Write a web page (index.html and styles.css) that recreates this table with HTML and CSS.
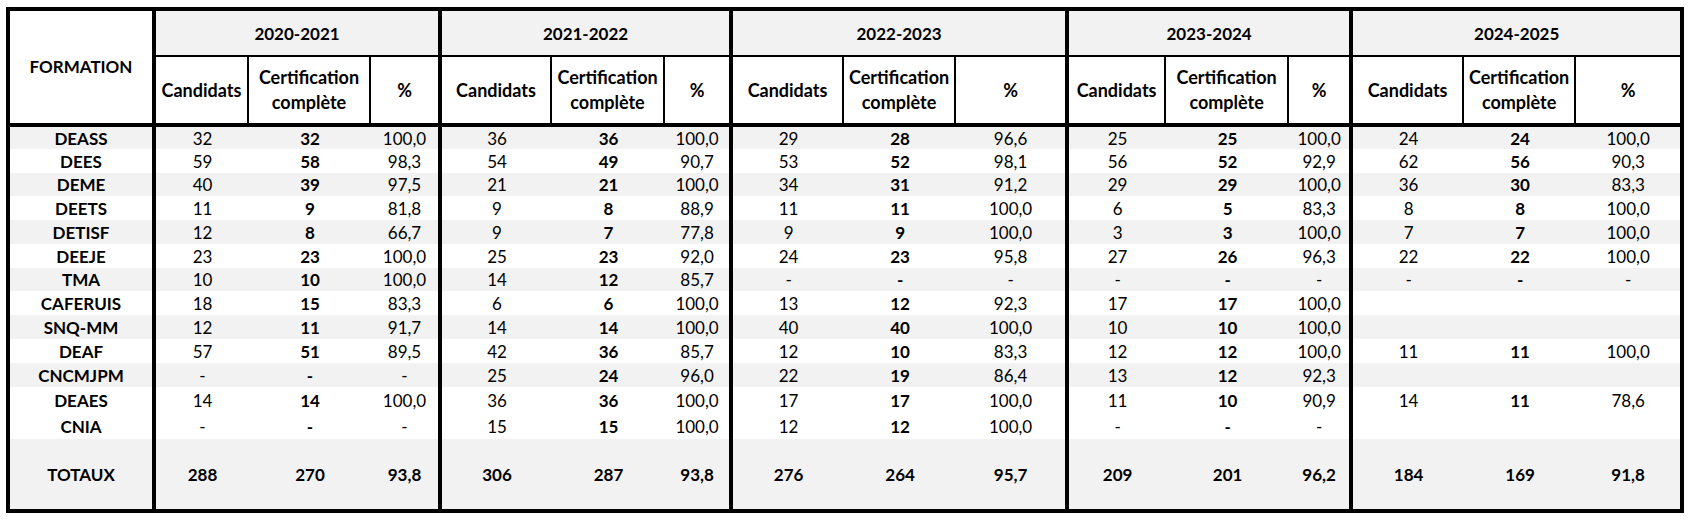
FILE: index.html
```html
<!DOCTYPE html>
<html lang="fr">
<head>
<meta charset="utf-8">
<title>Résultats par formation</title>
<link rel="stylesheet" href="styles.css">
</head>
<body>
<table class="results">
  <colgroup>
    <col class="w-form">
    <col class="w93"><col class="w122"><col class="w71">
    <col class="w110"><col class="w113"><col class="w68">
    <col class="w111"><col class="w112"><col class="w113">
    <col class="w97"><col class="w123"><col class="w64">
    <col class="w111"><col class="w112"><col class="w104">
  </colgroup>
  <thead>
    <tr class="years">
      <th rowspan="2" class="formation">FORMATION</th>
      <th colspan="3">2020-2021</th>
      <th colspan="3">2021-2022</th>
      <th colspan="3">2022-2023</th>
      <th colspan="3">2023-2024</th>
      <th colspan="3">2024-2025</th>
    </tr>
    <tr class="subhead">
      <th>Candidats</th><th>Certification complète</th><th>%</th>
      <th>Candidats</th><th>Certification complète</th><th>%</th>
      <th>Candidats</th><th>Certification complète</th><th>%</th>
      <th>Candidats</th><th>Certification complète</th><th>%</th>
      <th>Candidats</th><th>Certification complète</th><th>%</th>
    </tr>
  </thead>
  <tbody>
    <tr class="alt h22"><th>DEASS</th>
      <td>32</td><td>32</td><td>100,0</td>
      <td>36</td><td>36</td><td>100,0</td>
      <td>29</td><td>28</td><td>96,6</td>
      <td>25</td><td>25</td><td>100,0</td>
      <td>24</td><td>24</td><td>100,0</td></tr>
    <tr><th>DEES</th>
      <td>59</td><td>58</td><td>98,3</td>
      <td>54</td><td>49</td><td>90,7</td>
      <td>53</td><td>52</td><td>98,1</td>
      <td>56</td><td>52</td><td>92,9</td>
      <td>62</td><td>56</td><td>90,3</td></tr>
    <tr class="alt h23"><th>DEME</th>
      <td>40</td><td>39</td><td>97,5</td>
      <td>21</td><td>21</td><td>100,0</td>
      <td>34</td><td>31</td><td>91,2</td>
      <td>29</td><td>29</td><td>100,0</td>
      <td>36</td><td>30</td><td>83,3</td></tr>
    <tr><th>DEETS</th>
      <td>11</td><td>9</td><td>81,8</td>
      <td>9</td><td>8</td><td>88,9</td>
      <td>11</td><td>11</td><td>100,0</td>
      <td>6</td><td>5</td><td>83,3</td>
      <td>8</td><td>8</td><td>100,0</td></tr>
    <tr class="alt"><th>DETISF</th>
      <td>12</td><td>8</td><td>66,7</td>
      <td>9</td><td>7</td><td>77,8</td>
      <td>9</td><td>9</td><td>100,0</td>
      <td>3</td><td>3</td><td>100,0</td>
      <td>7</td><td>7</td><td>100,0</td></tr>
    <tr><th>DEEJE</th>
      <td>23</td><td>23</td><td>100,0</td>
      <td>25</td><td>23</td><td>92,0</td>
      <td>24</td><td>23</td><td>95,8</td>
      <td>27</td><td>26</td><td>96,3</td>
      <td>22</td><td>22</td><td>100,0</td></tr>
    <tr class="alt h23"><th>TMA</th>
      <td>10</td><td>10</td><td>100,0</td>
      <td>14</td><td>12</td><td>85,7</td>
      <td>-</td><td>-</td><td>-</td>
      <td>-</td><td>-</td><td>-</td>
      <td>-</td><td>-</td><td>-</td></tr>
    <tr><th>CAFERUIS</th>
      <td>18</td><td>15</td><td>83,3</td>
      <td>6</td><td>6</td><td>100,0</td>
      <td>13</td><td>12</td><td>92,3</td>
      <td>17</td><td>17</td><td>100,0</td>
      <td></td><td></td><td></td></tr>
    <tr class="alt"><th>SNQ-MM</th>
      <td>12</td><td>11</td><td>91,7</td>
      <td>14</td><td>14</td><td>100,0</td>
      <td>40</td><td>40</td><td>100,0</td>
      <td>10</td><td>10</td><td>100,0</td>
      <td></td><td></td><td></td></tr>
    <tr><th>DEAF</th>
      <td>57</td><td>51</td><td>89,5</td>
      <td>42</td><td>36</td><td>85,7</td>
      <td>12</td><td>10</td><td>83,3</td>
      <td>12</td><td>12</td><td>100,0</td>
      <td>11</td><td>11</td><td>100,0</td></tr>
    <tr class="alt"><th>CNCMJPM</th>
      <td>-</td><td>-</td><td>-</td>
      <td>25</td><td>24</td><td>96,0</td>
      <td>22</td><td>19</td><td>86,4</td>
      <td>13</td><td>12</td><td>92,3</td>
      <td></td><td></td><td></td></tr>
    <tr class="h26"><th>DEAES</th>
      <td>14</td><td>14</td><td>100,0</td>
      <td>36</td><td>36</td><td>100,0</td>
      <td>17</td><td>17</td><td>100,0</td>
      <td>11</td><td>10</td><td>90,9</td>
      <td>14</td><td>11</td><td>78,6</td></tr>
    <tr class="h26"><th>CNIA</th>
      <td>-</td><td>-</td><td>-</td>
      <td>15</td><td>15</td><td>100,0</td>
      <td>12</td><td>12</td><td>100,0</td>
      <td>-</td><td>-</td><td>-</td>
      <td></td><td></td><td></td></tr>
  </tbody>
  <tfoot>
    <tr class="total"><th>TOTAUX</th>
      <td>288</td><td>270</td><td>93,8</td>
      <td>306</td><td>287</td><td>93,8</td>
      <td>276</td><td>264</td><td>95,7</td>
      <td>209</td><td>201</td><td>96,2</td>
      <td>184</td><td>169</td><td>91,8</td></tr>
  </tfoot>
</table>
</body>
</html>
```
FILE: styles.css
```css
html, body {
  margin: 0;
  background: #ffffff;
}

body {
  padding: 7px 0 0 6px;
  font-family: "Lato", "Open Sans", sans-serif;
  font-size: 17px;
  color: #000000;
}

.results {
  border-collapse: separate;
  border-spacing: 0;
  table-layout: fixed;
  width: 1678px;
  border: 4px solid #000000;
}

.results th,
.results td {
  box-sizing: border-box;
  padding: 0;
  text-align: center;
  vertical-align: middle;
  white-space: nowrap;
}

/* column widths */
.w-form { width: 146px; }
.w64 { width: 64px; }
.w68 { width: 68px; }
.w71 { width: 71px; }
.w93 { width: 93px; }
.w97 { width: 97px; }
.w104 { width: 104px; }
.w110 { width: 110px; }
.w111 { width: 111px; }
.w112 { width: 112px; }
.w113 { width: 113px; }
.w122 { width: 122px; }
.w123 { width: 123px; }

/* header */
.years { height: 46px; }
.years th {
  font-weight: 700;
  background: #f2f2f2;
  border-right: 4px solid #000000;
  border-bottom: 2px solid #000000;
}
.years th:last-child { border-right: 0; }
.years th.formation {
  background: #ffffff;
  border-bottom: 4px solid #000000;
  padding-bottom: 2px;
}

.subhead { height: 70px; }
.subhead th {
  font-size: 18px;
  font-weight: 700;
  line-height: 25px;
  white-space: normal;
  background: #ffffff;
  border-right: 2px solid #000000;
  border-bottom: 4px solid #000000;
}
.subhead th:nth-child(3n) { border-right-width: 4px; }
.subhead th:last-child { border-right: 0; }

/* body rows */
tbody tr { height: 24px; }
tbody tr.h22 { height: 22px; }
tbody tr.h23 { height: 23px; }
tbody tr.h26 { height: 26px; }

tbody tr.alt,
.total { background: #f2f2f2; }

.results tbody th,
.results tfoot th {
  font-weight: 700;
  border-right: 4px solid #000000;
}

.results tbody td {
  font-weight: 400;
}

.results tbody td:nth-child(3n) { font-weight: 700; }

.results tbody td:nth-child(3n+1),
.results tfoot td:nth-child(3n+1) {
  border-right: 4px solid #000000;
}
.results tbody td:last-child,
.results tfoot td:last-child { border-right: 0; }

.total { height: 70px; }
.total th,
.total td { font-weight: 700; }
```
